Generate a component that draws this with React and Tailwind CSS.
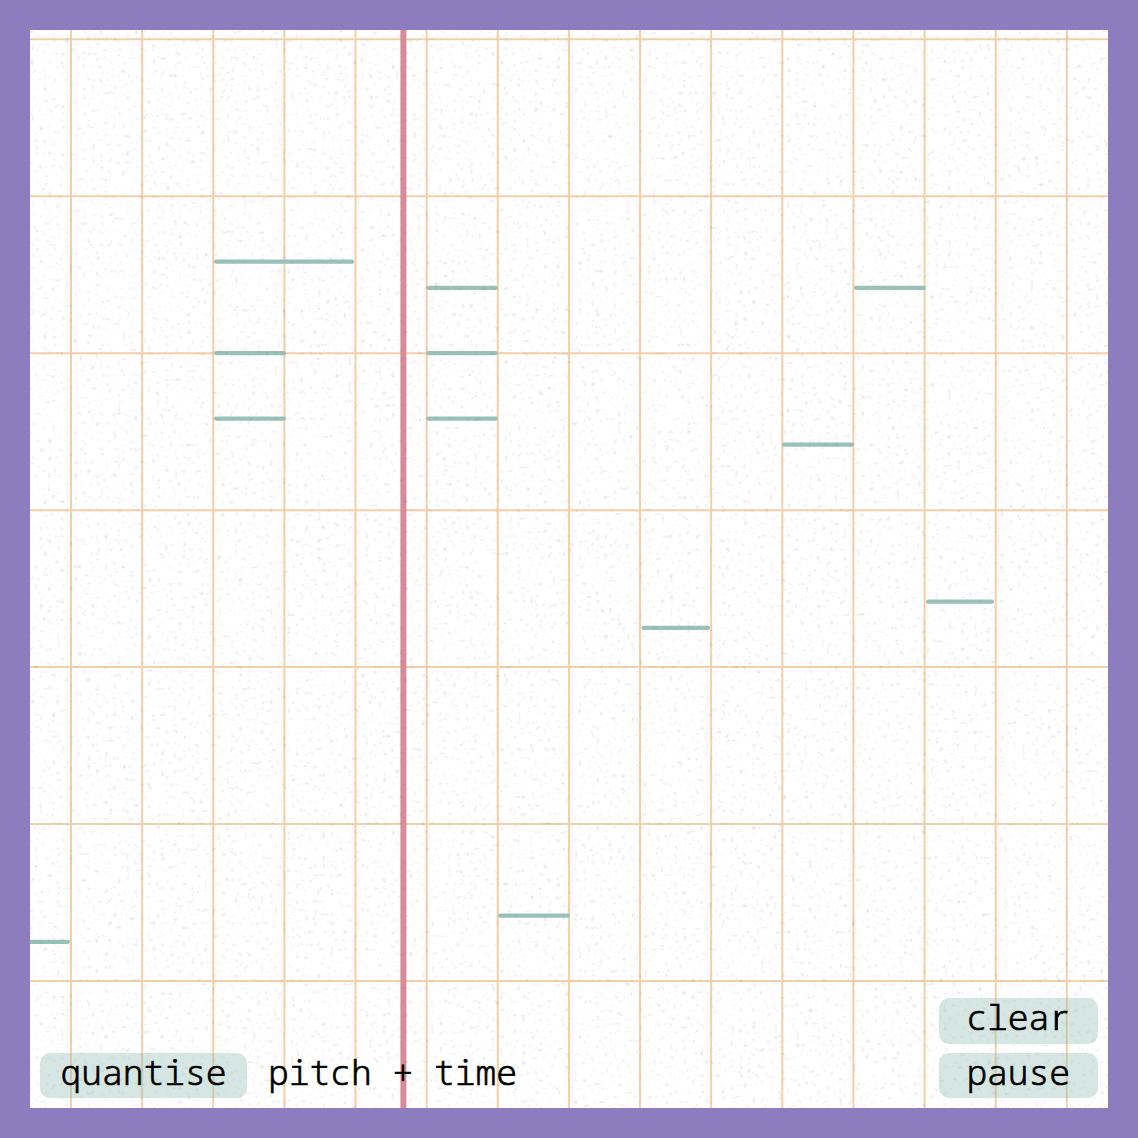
const verticals = Array.from({ length: 15 }, (_, i) => 71 + i * 71.13);
const horizontals = Array.from({ length: 7 }, (_, i) => 39.3 + i * 156.95);

const notes = [
  [214, 354, 261.6],
  [214, 286, 353.1],
  [214, 286, 418.6],
  [426, 498, 287.8],
  [426, 498, 353.1],
  [426, 498, 418.6],
  [854, 926, 287.8],
  [782, 854, 444.7],
  [926, 994, 601.7],
  [641.5, 710, 627.9],
  [498, 570, 915.6],
  [20, 70, 941.8],
];

function Roll() {
  return (
    <svg className="absolute inset-0 h-full w-full" viewBox="30 30 1078 1078">
      <defs>
        <filter id="grain" x="0" y="0" width="100%" height="100%" colorInterpolationFilters="sRGB">
          <feTurbulence type="fractalNoise" baseFrequency="0.23" numOctaves="2" seed="8" />
          <feColorMatrix values="0 0 0 0 0.4  0 0 0 0 0.4  0 0 0 0 0.4  0.55 0 0 0 -0.325" />
          <feGaussianBlur stdDeviation="0.5" />
        </filter>
      </defs>
      <rect x="30" y="30" width="1078" height="1078" fill="#fff" />
      <g stroke="#f4cfa8" strokeWidth="2">
        {verticals.map((x) => (
          <line key={x} x1={x} x2={x} y1="30" y2="1108" />
        ))}
        {horizontals.map((y) => (
          <line key={y} x1="30" x2="1108" y1={y} y2={y} />
        ))}
      </g>
      <g stroke="#99c1b9" strokeWidth="4.2" strokeLinecap="round">
        {notes.map(([a, b, y]) => (
          <line key={`${a}-${y}`} x1={a + 2} x2={b - 2} y1={y} y2={y} />
        ))}
      </g>
      <rect x="400.4" y="30" width="6" height="1078" fill="#d88c9a" />
      <rect x="30" y="30" width="1078" height="1078" filter="url(#grain)" />
    </svg>
  );
}

export default function App() {
  return (
    <main className="h-[1138px] w-[1138px] bg-[#8e7dbe] p-[30px] text-[34.6px] font-light leading-[38px] text-black [-webkit-text-stroke:0.7px_black] [font-family:'Noto_Sans_Mono','DejaVu_Sans_Mono',monospace]">
      <div className="relative flex h-full w-full items-end justify-between overflow-hidden p-[10px]">
        <Roll />
        <div className="relative flex items-center">
          <button className="h-[45.5px] w-[207px] rounded-[10px] bg-[#99c1b9]/40 pb-[7px]">quantise</button>
          <span className="ml-[21px] pb-[7px] whitespace-pre">pitch + time</span>
        </div>
        <div className="relative flex flex-col gap-[9px]">
          <button className="h-[45.5px] w-[159.5px] rounded-[10px] bg-[#99c1b9]/40 pb-2">
            clea<span className="inline-block w-[20.76px] origin-left scale-x-[1.2] pl-[2px] text-left [font-family:'Noto_Sans']">r</span>
          </button>
          <button className="h-[45.5px] w-[159.5px] rounded-[10px] bg-[#99c1b9]/40 pb-[7px]">pause</button>
        </div>
      </div>
    </main>
  );
}
